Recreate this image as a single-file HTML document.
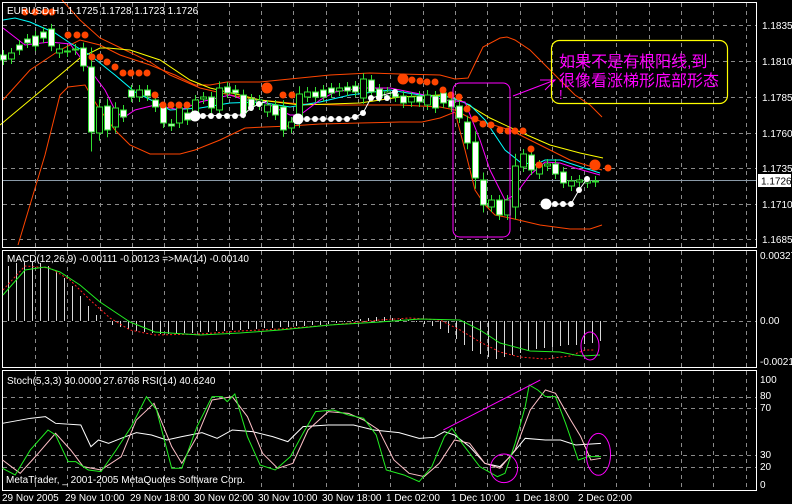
<!DOCTYPE html>
<html><head><meta charset="utf-8"><style>
html,body{margin:0;padding:0;background:#000;}
body{width:792px;height:504px;overflow:hidden;}
svg{display:block;font-family:"Liberation Sans","Noto Sans CJK SC",sans-serif;}
.ax{fill:#fff;font-size:10px;}
</style></head><body>
<svg id="s" width="792" height="504" viewBox="0 0 792 504" xmlns="http://www.w3.org/2000/svg">
<rect width="792" height="504" fill="#000"/>
<g id="grid" stroke="#8a8a8a" stroke-width="1" stroke-dasharray="4,4" shape-rendering="crispEdges"></g>
<!-- price line -->
<line x1="3" y1="180.5" x2="756" y2="180.5" stroke="#8a9aa8" shape-rendering="crispEdges"/>
<!-- bollinger bands -->
<g fill="none" stroke="#ff4500" stroke-width="1">
<polyline points="18,245 30,205 45,155 60,95 68,87 85,85 92,97 100,110 115,130 130,145 150,154 180,154 195,150 220,140 245,128 265,127 290,126 320,124 360,123 400,122 422,122 440,118 455,112 465,150 475,190 485,205 495,215 510,218 540,225 570,229 590,229 602,225"/>
<polyline points="3,100 30,70 60,50 80,40 100,45 120,55 150,65 175,75 195,85 210,85 227,82 260,82 300,78 330,75 370,73 400,74 440,75 455,79 468,78 483,47 500,38 507,37 515,40 530,50 545,65 560,80 575,95 590,105 602,117"/>
<polyline points="62,0 80,20 100,38 125,50 150,62 170,75 200,88 230,95 260,100 300,104 340,105 400,105 440,107 455,110 470,118 490,124 510,130 540,145 570,160 602,170"/>
</g>
<polyline fill="none" stroke="#ffff00" points="0,125 30,100 60,75 80,58 100,48 108,48 130,50 160,60 190,80 210,88 240,95 260,100 300,105 330,104 360,103 400,97 440,95 460,100 490,118 520,132 550,145 580,153 603,158"/>
<polyline fill="none" stroke="#00ffff" points="3,20 15,18 30,22 55,33 70,43 90,55 115,75 135,92 155,102 170,110 200,108 230,103 260,102 290,107 320,102 350,95 390,90 420,95 450,97 470,105 485,120 505,150 520,162 535,165 545,160 560,160 575,165 600,173"/>
<polyline fill="none" stroke="#ff00ff" points="3,28 25,45 50,42 70,44 90,70 105,90 115,110 123,118 135,110 155,105 180,110 200,102 230,95 245,100 260,100 290,115 300,115 320,100 335,92 360,88 390,88 420,94 445,100 465,102 480,140 490,170 505,200 515,195 530,175 545,162 560,163 575,168 600,175"/>
<g id="candles"></g>
<polyline fill="none" stroke="#fff" points="195,116 243,115 251,108 259,104 267,101"/>
<polyline fill="none" stroke="#fff" points="298,119 347,119 355,117 363,113 371,98 395,92"/>
<polyline fill="none" stroke="#fff" points="546,204 571,204 579,190 587,179"/>
<g id="dots"></g>
<!-- frames -->
<g fill="none" stroke="#fff" stroke-width="1" shape-rendering="crispEdges">
<rect x="2.5" y="2.5" width="754" height="245"/>
<rect x="2.5" y="250.5" width="754" height="117"/>
<rect x="2.5" y="370.5" width="754" height="120"/>
</g>
<text x="7" y="14" class="ax" font-size="11">EURUSD,H1  1.1725 1.1728 1.1723 1.1726</text>
<!-- price axis -->
<g class="ax">
<text x="762" y="29">1.1835</text><text x="762" y="65">1.1810</text><text x="762" y="101">1.1785</text>
<text x="762" y="137">1.1760</text><text x="762" y="172">1.1735</text><text x="762" y="208">1.1710</text><text x="762" y="243">1.1685</text>
</g>
<rect x="758" y="174" width="33" height="13" fill="#fff"/>
<text x="761" y="184.5" font-size="10" fill="#000">1.1726</text>
<!-- annotations -->
<rect x="453" y="83" width="57" height="154" rx="7" fill="none" stroke="#ff00ff"/>
<polyline fill="none" stroke="#ff00ff" points="513,96 555,80 540,80 555,80 545,90"/>
<rect x="551.5" y="40.5" width="176" height="63" rx="8" fill="none" stroke="#ffff00" stroke-width="1.2"/>
<g fill="#ff00ff" font-size="16">
<text x="559" y="67">如果不是有根阳线,到</text>
<text x="559" y="86">很像看涨梯形底部形态</text>
<text x="559" y="99" font-size="13">!</text>
</g>
<!-- MACD -->
<text x="7" y="262" class="ax" font-size="10">MACD(12,26,9) -0.00111 -0.00123  =&gt;MA(14) -0.00140</text>
<g id="hist" stroke="#d8d8d8" shape-rendering="crispEdges"></g>
<polyline fill="none" stroke="#ff2020" stroke-dasharray="2,2" points="3,290 25,266 50,268 70,280 90,300 110,318 130,330 155,335 200,334 240,331 280,329 330,325 380,320 410,318 440,320 460,330 480,342 500,352 520,357 545,359 570,356 585,350 595,350"/>
<polyline fill="none" stroke="#22ee22" points="3,295 25,270 45,267 60,272 80,285 100,302 130,322 155,332 200,335 240,333 280,330 330,325 380,322 420,319 460,320 480,330 500,343 530,351 560,352 575,355 583,356 600,355"/>
<ellipse cx="590" cy="346" rx="9" ry="14" fill="none" stroke="#ff00ff"/>
<g class="ax" font-size="9"><text x="760" y="259">0.00327</text><text x="760" y="324">0.00</text><text x="760" y="365">-0.0021</text></g>
<!-- Stoch -->
<text x="7" y="384" class="ax" font-size="10">Stoch(5,3,3) 30.0000 27.6768  RSI(14) 40.6240</text>
<g transform="translate(0,250) scale(0.505,0.3333)" fill="none">
<polyline vector-effect="non-scaling-stroke" stroke="#ffffff" points="5,520 60,505 90,500 110,520 160,525 180,590 195,570 215,580 240,565 270,548 300,555 330,570 360,560 400,548 430,565 460,540 500,545 540,560 570,575 600,530 650,525 700,525 740,540 790,548 830,565 860,562 880,545 900,555 930,590 960,640 990,650 1010,620 1040,565 1080,570 1110,570 1140,585 1190,580"/>
<polyline vector-effect="non-scaling-stroke" stroke="#ffc0c8" points="5,630 40,670 70,620 110,550 140,600 165,650 200,660 240,620 270,510 305,460 340,590 360,640 390,560 420,450 460,440 490,500 520,610 550,655 580,640 610,540 650,485 690,490 720,510 750,540 780,630 810,670 840,680 870,640 900,570 930,580 960,640 990,655 1020,600 1050,480 1080,420 1100,430 1130,510 1150,560 1170,630 1190,625"/>
<polyline vector-effect="non-scaling-stroke" stroke="#22ee22" points="5,655 30,675 60,600 95,540 110,555 135,635 150,635 175,660 200,665 230,600 260,530 290,440 310,480 340,655 360,655 390,530 420,440 440,440 450,455 465,432 490,560 515,645 545,660 575,620 600,550 625,485 660,480 690,495 720,505 745,555 765,660 800,675 830,695 855,650 880,560 895,535 915,580 950,650 985,680 1000,670 1020,580 1040,470 1048,405 1065,420 1080,440 1100,440 1120,520 1145,630 1165,620 1190,620"/>
<polyline vector-effect="non-scaling-stroke" stroke="#ff00ff" points="878,540 1070,390"/>
<ellipse vector-effect="non-scaling-stroke" cx="998" cy="655" rx="27" ry="43" stroke="#ff00ff"/>
<ellipse vector-effect="non-scaling-stroke" cx="1185" cy="613" rx="24" ry="63" stroke="#ff00ff"/>
</g>
<g class="ax" font-size="9"><text x="760" y="383">100</text><text x="760" y="399">80</text><text x="760" y="411">70</text><text x="760" y="458">30</text><text x="760" y="470">20</text><text x="760" y="488">0</text></g>
<text x="6" y="483" class="ax" font-size="10">MetaTrader, _ 2001-2005 MetaQuotes Software Corp.</text>
<!-- time axis -->
<g class="ax" font-size="10">
<text x="2" y="501">29 Nov 2005</text><text x="65" y="501">29 Nov 10:00</text><text x="130" y="501">29 Nov 18:00</text>
<text x="194" y="501">30 Nov 02:00</text><text x="258" y="501">30 Nov 10:00</text><text x="322" y="501">30 Nov 18:00</text>
<text x="386" y="501">1 Dec 02:00</text><text x="451" y="501">1 Dec 10:00</text><text x="515" y="501">1 Dec 18:00</text><text x="578" y="501">2 Dec 02:00</text>
</g>
</svg>
<script>
(function(){
var NS="http://www.w3.org/2000/svg";
function el(p,t,a){var e=document.createElementNS(NS,t);for(var k in a)e.setAttribute(k,a[k]);p.appendChild(e);return e;}
var g=document.getElementById("grid");
for(var i=0;i<23;i++){var x=Math.round(35+32.3*i)+0.5;
 el(g,"line",{x1:x,y1:3,x2:x,y2:247});el(g,"line",{x1:x,y1:251,x2:x,y2:367});el(g,"line",{x1:x,y1:371,x2:x,y2:490});}
[25,61,97,133,168,204,239,321,397,408,455,467].forEach(function(y){el(g,"line",{x1:3,y1:y+0.5,x2:756,y2:y+0.5});});
var c=[[3,55,60,0],[11,53,59,1],[19,45,50,0],[27,39,43,0],[35,36,46,0],[43,32,38,0],[51,29,46,0],[59,49,53,1],[67,51,52,1],[75,49,50,1],[83,48,66,0],[91,67,132,0],[99,107,133,1],[107,106,130,0],[115,108,127,1],[123,110,117,0],[131,90,97,0],[139,90,97,1],[147,90,96,0],[155,100,107,0],[163,107,123,0],[171,124,126,0],[179,108,123,1],[187,113,120,0],[195,100,112,1],[203,97,99,1],[211,97,108,0],[219,88,110,1],[227,87,93,0],[235,90,93,0],[243,95,113,0],[251,99,106,0],[259,100,105,1],[267,105,112,1],[275,105,115,0],[283,107,130,0],[291,122,128,1],[299,94,120,1],[307,92,97,1],[315,92,97,0],[323,90,97,0],[331,88,93,0],[339,88,91,1],[347,87,91,0],[355,86,92,0],[363,79,98,1],[371,80,92,0],[379,89,97,0],[387,92,96,1],[395,94,97,0],[403,96,103,0],[411,97,102,1],[419,96,102,0],[427,95,105,1],[435,96,108,0],[443,93,103,0],[451,100,107,0],[459,106,118,0],[467,122,143,0],[475,142,178,0],[483,180,205,0],[491,200,207,1],[499,200,215,0],[507,200,215,1],[515,166,207,1],[523,154,167,1],[531,155,170,0],[539,165,174,1],[547,164,166,1],[555,164,174,0],[563,172,183,0],[571,181,186,1],[579,180,182,1],[587,181,183,1],[595,181,182,1]];
var cg=document.getElementById("candles");
c.forEach(function(d){var x=d[0],t=d[1],b=d[2],h=b-t,ext=Math.max(5,h*0.3);
 el(cg,"line",{x1:x+0.5,y1:t-ext,x2:x+0.5,y2:b+ext,stroke:"#32e032"});
 el(cg,"rect",{x:x-2.5,y:t,width:6,height:Math.max(1,h),fill:d[3]?"#000":"#fff",stroke:"#32e032"});});
var dg=document.getElementById("dots");
var o=[[25,12],[35,12],[45,12],[52,12],[68,35],[77,35],[85,35],[92,57],[100,57],[107,62],[115,67],[123,73],[131,73],[139,73],[147,73],[155,95],[163,105],[171,105],[179,105],[187,105],[283,95],[292,95],[412,80],[420,81],[427,82],[435,82],[443,90],[451,95],[459,97],[467,109],[475,119],[483,124],[491,125],[500,130],[508,131],[515,131],[523,131],[531,149],[539,165],[608,168]];
o.forEach(function(p){el(dg,"circle",{cx:p[0],cy:p[1],r:3.5,fill:"#ff4500"});});
[[267,88],[403,79],[595,165]].forEach(function(p){el(dg,"circle",{cx:p[0],cy:p[1],r:5.5,fill:"#ff4500"});});
var w=[[203,116],[211,116],[219,116],[227,116],[235,116],[243,115],[251,108],[259,104],[307,119],[315,119],[323,119],[331,119],[339,119],[347,119],[355,117],[363,113],[371,98],[379,98],[387,98],[395,92],[555,204],[563,204],[571,204],[579,190],[587,179]];
w.forEach(function(p){el(dg,"circle",{cx:p[0],cy:p[1],r:3,fill:"#fff"});});
[[195,116],[298,119],[546,204]].forEach(function(p){el(dg,"circle",{cx:p[0],cy:p[1],r:5.5,fill:"#fff"});});
var hg=document.getElementById("hist");
var hv=[[8,-55],[16,-58],[24,-60],[32,-60],[40,-58],[48,-55],[56,-50],[64,-43],[72,-35],[80,-25],[88,-15],[96,-6],[104,0],[112,4],[120,6],[128,8],[136,10],[144,11],[152,12],[160,13],[168,13],[176,13],[184,12],[192,12],[200,11],[208,11],[216,10],[224,10],[232,9],[240,9],[248,8],[256,8],[264,7],[272,7],[280,6],[288,6],[296,5],[304,5],[312,4],[320,4],[328,3],[336,2],[344,1],[352,-1],[360,-2],[368,-3],[376,-4],[384,-4],[392,-3],[400,-2],[408,-1],[416,1],[424,3],[432,5],[440,8],[448,12],[456,18],[464,24],[472,30],[480,33],[488,36],[496,38],[504,36],[512,34],[520,32],[528,30],[536,28],[544,27],[552,26],[560,25],[568,24],[576,24],[584,23],[592,22],[600,20]];
hv.forEach(function(d){var x=d[0]+0.5;el(hg,"line",{x1:x,y1:321,x2:x,y2:321+d[1]});});
})();
</script>
</body></html>
